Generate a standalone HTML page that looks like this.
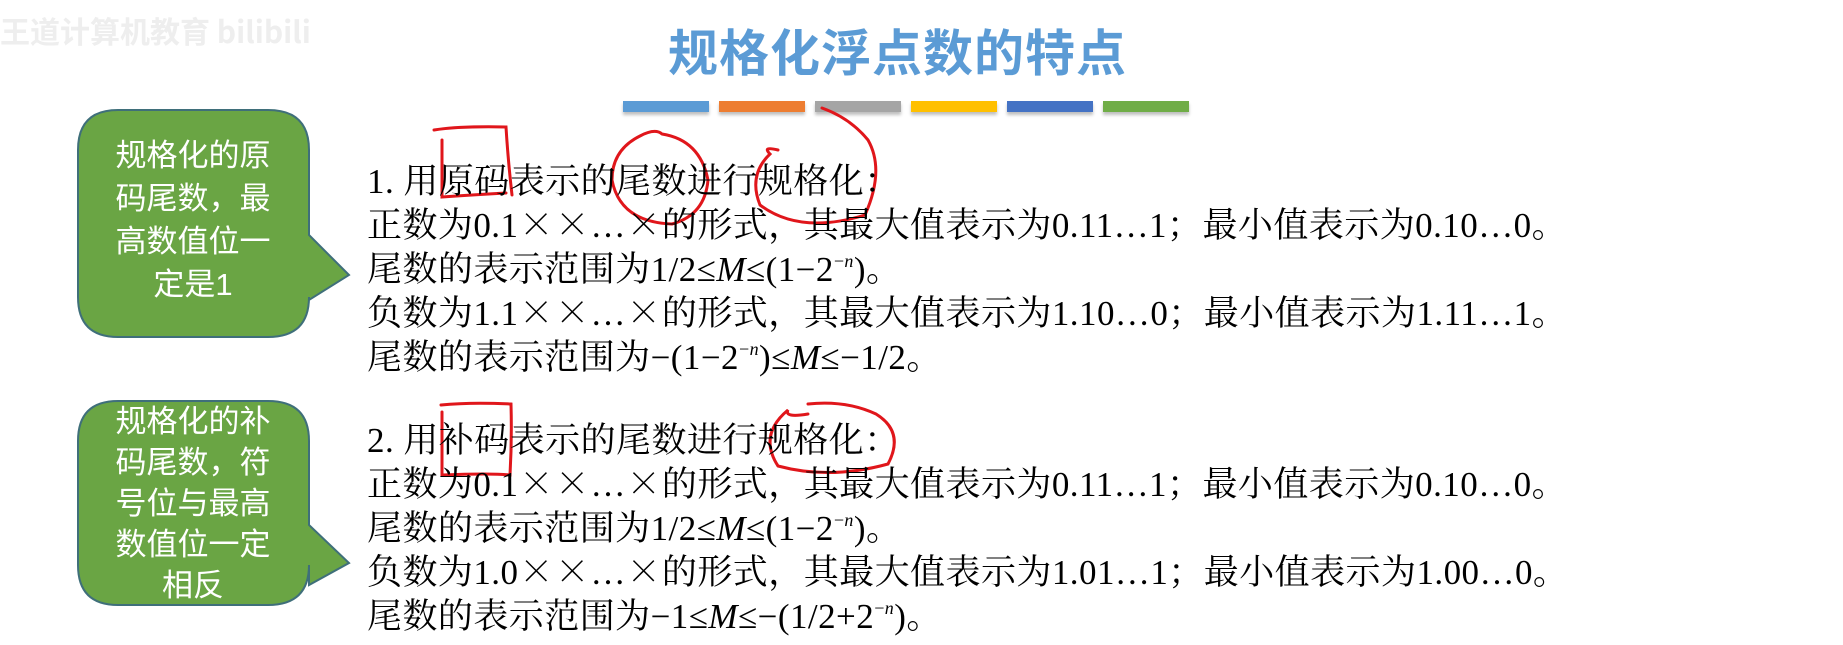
<!DOCTYPE html>
<html><head><meta charset="utf-8"><style>
body{margin:0;width:1843px;height:645px;background:#fff;position:relative;overflow:hidden;font-family:"Liberation Serif","Noto Serif CJK SC",serif;}
.title{position:absolute;left:0;width:1795px;text-align:center;top:14px;font-family:"Liberation Sans","Noto Sans CJK SC",sans-serif;font-size:50px;font-weight:bold;color:#5b9bd5;letter-spacing:1px}
.bar{position:absolute;top:101px;height:11px;width:86px;box-shadow:0 3px 3px rgba(0,0,0,.25)}
.txt{position:absolute;left:367px;font-size:35px;line-height:44px;color:#000;white-space:nowrap;letter-spacing:0.45px}
.txt s{text-decoration:none;font-size:18px;position:relative;top:-14px;line-height:0}
.txt b{font-weight:normal;font-family:"Noto Serif CJK SC",serif;display:inline-block;width:36px;text-align:center;line-height:0}
.bub{position:absolute;color:#fff;font-family:"Liberation Sans","Noto Sans CJK SC",sans-serif;font-size:31px;text-align:center;width:200px}
.wm{position:absolute;left:0;top:8px;font-family:"Noto Sans CJK SC",sans-serif;font-size:30px;font-weight:bold;color:#eee}
</style></head><body>
<div class="wm">王道计算机教育 bilibili</div>
<div class="title">规格化浮点数的特点</div>
<div class="bar" style="left:623px;background:#5b9bd5"></div>
<div class="bar" style="left:719px;background:#ed7d31"></div>
<div class="bar" style="left:815px;background:#a5a5a5"></div>
<div class="bar" style="left:911px;background:#ffc000"></div>
<div class="bar" style="left:1007px;background:#4472c4"></div>
<div class="bar" style="left:1103px;background:#70ad47"></div>
<svg width="1843" height="645" style="position:absolute;left:0;top:0">
<path d="M118,110 H268 Q309,110 309,150 V235 L349,275 L309,300 V297 Q309,337 268,337 H118 Q78,337 78,297 V150 Q78,110 118,110 Z" fill="#6aa544" stroke="#3f6f7a" stroke-width="2"/>
<path d="M118,401 H268 Q309,401 309,441 V525 L349,563 L309,585 V565 Q309,605 268,605 H118 Q78,605 78,565 V441 Q78,401 118,401 Z" fill="#6aa544" stroke="#3f6f7a" stroke-width="2"/>
<g fill="none" stroke="#e0161b" stroke-width="3" stroke-linecap="round">
<path d="M434,130 Q460,126 506,127 Q508,160 512,195"/>
<path d="M442,140 V197 Q470,195 506,193"/>
<path d="M640,136 Q655,128 662,134 Q700,140 708,180 Q705,215 672,224 Q620,222 612,180 Q612,150 640,136"/>
<path d="M778,150 Q762,146 770,154 Q748,175 760,205 Q800,235 865,215 Q885,170 868,140 Q850,118 822,108"/>
<path d="M441,405 Q470,402 511,404 Q512,440 510,475 Q490,473 442,475 V412"/>
<path d="M808,414 Q784,418 788,410 Q758,435 778,466 Q830,480 888,464 Q905,432 876,414 Q846,400 808,404"/>
</g>
</svg>
<div class="bub" style="left:93px;top:134px;line-height:43px">规格化的原<br>码尾数，最<br>高数值位一<br>定是1</div>
<div class="bub" style="left:93px;top:401px;line-height:41px">规格化的补<br>码尾数，符<br>号位与最高<br>数值位一定<br>相反</div>
<div class="txt" style="top:160px">1. 用原码表示的尾数进行规格化：<br>正数为0.1<b>×</b><b>×</b>…<b>×</b>的形式，其最大值表示为0.11…1；最小值表示为0.10…0。<br>尾数的表示范围为1/2≤<i>M</i>≤(1−2<s>−<i>n</i></s>)。<br>负数为1.1<b>×</b><b>×</b>…<b>×</b>的形式，其最大值表示为1.10…0；最小值表示为1.11…1。<br>尾数的表示范围为−(1−2<s>−<i>n</i></s>)≤<i>M</i>≤−1/2。</div>
<div class="txt" style="top:419px">2. 用补码表示的尾数进行规格化：<br>正数为0.1<b>×</b><b>×</b>…<b>×</b>的形式，其最大值表示为0.11…1；最小值表示为0.10…0。<br>尾数的表示范围为1/2≤<i>M</i>≤(1−2<s>−<i>n</i></s>)。<br>负数为1.0<b>×</b><b>×</b>…<b>×</b>的形式，其最大值表示为1.01…1；最小值表示为1.00…0。<br>尾数的表示范围为−1≤<i>M</i>≤−(1/2+2<s>−<i>n</i></s>)。</div>
</body></html>
